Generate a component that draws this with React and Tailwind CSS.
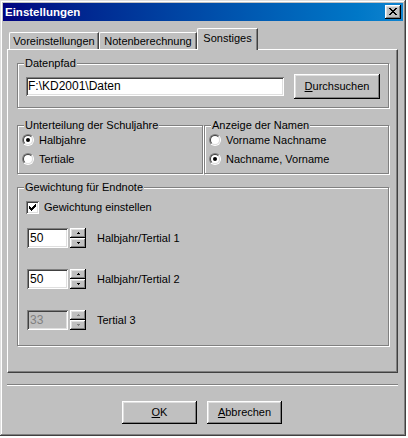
import React from 'react';

// classic 3d edges
const raised = 'shadow-[inset_-1px_-1px_#000,inset_1px_1px_#fff,inset_-2px_-2px_#808080,inset_2px_2px_#dfdfdf]';
const sunken = 'shadow-[inset_1px_1px_#808080,inset_-1px_-1px_#fff,inset_2px_2px_#404040,inset_-2px_-2px_#dfdfdf]';

const Pixels = ({ w, h, rows, color = '#000' }) => (
  <svg width={w} height={h} viewBox={`0 0 ${w} ${h}`} shapeRendering="crispEdges">
    {rows.map(([x, y, rw], i) => (
      <rect key={i} x={x} y={y} width={rw} height={1} fill={color} />
    ))}
  </svg>
);

const closeRows = [
  [0, 0, 2], [6, 0, 2],
  [1, 1, 2], [5, 1, 2],
  [2, 2, 4],
  [3, 3, 2],
  [2, 4, 4],
  [1, 5, 2], [5, 5, 2],
  [0, 6, 2], [6, 6, 2],
];

const checkRows = [
  [6, 0, 1],
  [5, 1, 2],
  [0, 2, 1], [4, 2, 3],
  [0, 3, 2], [3, 3, 3],
  [0, 4, 5],
  [1, 5, 3],
  [2, 6, 1],
];

const Group = ({ label, className = '', children }) => (
  <div className={`relative border border-[#808080] shadow-[inset_1px_1px_#fff,1px_1px_#fff] ${className}`}>
    <span className="absolute left-[6px] -top-[7px] px-[1px] bg-[#c0c0c0] leading-[13px] whitespace-nowrap">
      {label}
    </span>
    {children}
  </div>
);

const Radio = ({ checked, label }) => (
  <div className="flex items-center h-[12px]">
    <div className="w-[12px] h-[12px] rounded-full border border-t-[#808080] border-l-[#808080] border-r-white border-b-white">
      <div className="w-[10px] h-[10px] rounded-full border border-t-[#404040] border-l-[#404040] border-r-[#dfdfdf] border-b-[#dfdfdf] bg-white flex items-center justify-center">
        {checked && <div className="w-[4px] h-[4px] rounded-full bg-black" />}
      </div>
    </div>
    <span className="ml-[5px] whitespace-nowrap">{label}</span>
  </div>
);

const SpinRow = ({ value, label, disabled }) => (
  <div className="flex items-center h-[20px] ml-[1px]">
    <div
      className={`w-[41px] h-[20px] ${sunken} ${disabled ? 'bg-[#c0c0c0] text-[#808080]' : 'bg-white'} pl-[3px] flex items-center text-[12px]`}
    >
      {value}
    </div>
    <div className="ml-[2px] w-[16px] h-[20px] flex flex-col">
      <div className={`h-[10px] ${raised} flex items-center justify-center`}>
        <Pixels w={3} h={2} rows={[[1, 0, 1], [0, 1, 3]]} color={disabled ? '#808080' : '#000'} />
      </div>
      <div className={`h-[10px] ${raised} flex items-center justify-center`}>
        <Pixels w={3} h={2} rows={[[0, 0, 3], [1, 1, 1]]} color={disabled ? '#808080' : '#000'} />
      </div>
    </div>
    <span className="ml-[11px] whitespace-nowrap">{label}</span>
  </div>
);

export default function App() {
  return (
    <div className="w-[408px] h-[438px] bg-white font-['Liberation_Sans',Arial,sans-serif] text-[11px] leading-[13px] text-black">
      <div className="w-[406px] h-[436px] bg-[#c0c0c0] p-[3px] flex flex-col shadow-[inset_-1px_-1px_#404040,inset_1px_1px_#dfdfdf,inset_-2px_-2px_#808080,inset_2px_2px_#fff]">
        {/* title bar */}
        <div className="h-[18px] flex items-center bg-linear-to-r from-[#000080] to-[#1084d0] pl-[2px] pr-[2px]">
          <span className="flex-1 text-white font-bold text-[11.5px]">Einstellungen</span>
          <div className={`w-[16px] h-[14px] bg-[#c0c0c0] ${raised} flex items-center justify-center pb-[1px]`}>
            <Pixels w={8} h={7} rows={closeRows} />
          </div>
        </div>

        <div className="px-[4px] pt-[7px] flex flex-col">
          {/* tabs */}
          <div className="flex items-end ml-[2px]">
            <div className="w-[90px] h-[17px] rounded-tl-[2px] border-t border-l border-white border-r border-r-[#404040] shadow-[inset_-1px_0_#808080] flex items-center justify-center">
              Voreinstellungen
            </div>
            <div className="w-[98px] h-[17px] rounded-tl-[2px] border-t border-l border-white border-r border-r-[#404040] shadow-[inset_-1px_0_#808080] flex items-center justify-center">
              Notenberechnung
            </div>
            <div className="relative z-10 w-[61px] h-[22px] -mb-[1px] bg-[#c0c0c0] rounded-tl-[2px] border-t border-l border-white border-r border-r-[#404040] shadow-[inset_-1px_0_#808080] flex items-start justify-center pt-[3px]">
              Sonstiges
            </div>
          </div>

          {/* panel */}
          <div className="w-[391px] h-[324px] border border-t-white border-l-white border-r-[#404040] border-b-[#404040] shadow-[inset_-1px_-1px_#808080] pl-[9px] pt-[13px] flex flex-col">
            <Group label="Datenpfad" className="w-[372px] pt-[10px] pb-[8px] pl-[8px] flex items-center">
              <div className={`w-[258px] h-[19px] bg-white ${sunken} pl-[2px] flex items-center text-[12px]`}>
                F:\KD2001\Daten
              </div>
              <div className={`ml-[10px] w-[86px] h-[25px] ${raised} flex items-center justify-center`}>
                <span><u>D</u>urchsuchen</span>
              </div>
            </Group>

            <div className="flex gap-[1px] mt-[17px]">
              <Group label="Unterteilung der Schuljahre" className="w-[186px] h-[49px] pl-[4px] pt-[8px] flex flex-col gap-[7px]">
                <Radio checked label="Halbjahre" />
                <Radio label="Tertiale" />
              </Group>
              <Group label="Anzeige der Namen" className="w-[185px] h-[49px] pl-[4px] pt-[8px] flex flex-col gap-[7px]">
                <Radio label="Vorname Nachname" />
                <Radio checked label="Nachname, Vorname" />
              </Group>
            </div>

            <Group label="Gewichtung für Endnote" className="mt-[13px] w-[372px] h-[159px] pl-[8px] pt-[13px] flex flex-col">
              <div className="flex items-center h-[13px]">
                <div className={`w-[13px] h-[13px] bg-white ${sunken} flex items-center justify-center`}>
                  <Pixels w={7} h={7} rows={checkRows} />
                </div>
                <span className="ml-[5px]">Gewichtung einstellen</span>
              </div>
              <div className="mt-[14px]">
                <SpinRow value="50" label="Halbjahr/Tertial 1" />
              </div>
              <div className="mt-[21px]">
                <SpinRow value="50" label="Halbjahr/Tertial 2" />
              </div>
              <div className="mt-[21px]">
                <SpinRow value="33" label="Tertial 3" disabled />
              </div>
            </Group>
          </div>

          {/* separator */}
          <div className="mt-[11px] w-[391px] h-[2px] border-t border-t-[#808080] border-b border-b-white" />

          {/* buttons */}
          <div className="mt-[15px] pl-[115px] flex gap-[10px]">
            <div className={`w-[75px] h-[23px] ${raised} flex items-center justify-center`}>
              <span><u>O</u>K</span>
            </div>
            <div className={`w-[75px] h-[23px] ${raised} flex items-center justify-center`}>
              <span><u>A</u>bbrechen</span>
            </div>
          </div>
        </div>
      </div>
    </div>
  );
}
